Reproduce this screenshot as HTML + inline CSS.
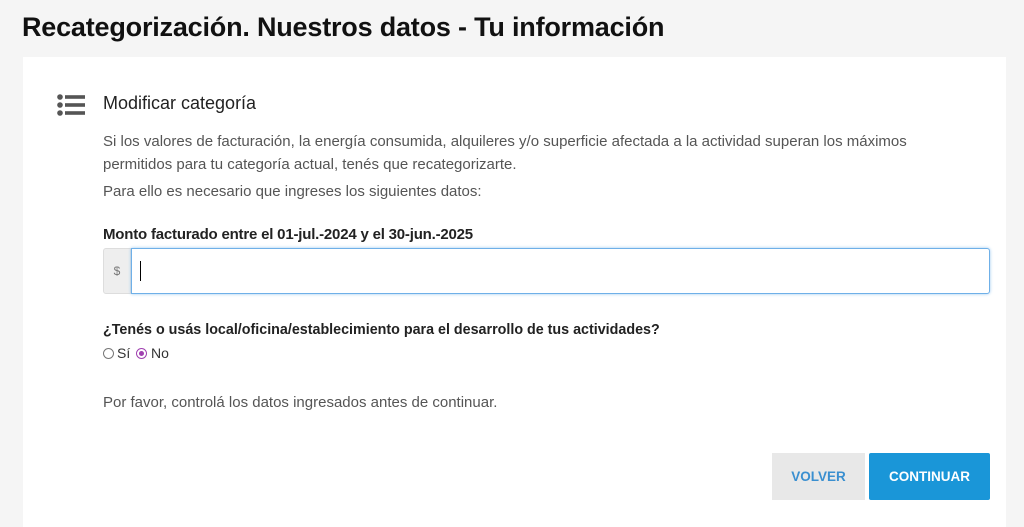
<!DOCTYPE html>
<html><head><meta charset="utf-8"><style>
body{margin:0;background:#f5f5f5;font-family:"Liberation Sans",sans-serif;width:1024px;height:521px;overflow:hidden;position:relative;color:#333}
h1{position:absolute;left:22px;top:12px;margin:0;font-size:27px;font-weight:bold;color:#111;letter-spacing:-0.2px}
.card{position:absolute;left:23px;top:57px;width:983px;height:470px;background:#fff}
.t{position:absolute;white-space:nowrap}
</style></head><body>
<h1>Recategorización. Nuestros datos - Tu información</h1>
<div class="card"></div>
<svg class="t" style="left:57px;top:94px" width="28" height="22" viewBox="0 0 28 22">
<g fill="#555"><circle cx="3" cy="3" r="2.8"/><circle cx="3" cy="11" r="2.8"/><circle cx="3" cy="19" r="2.8"/>
<rect x="8" y="1.2" width="20" height="3.6"/><rect x="8" y="9.2" width="20" height="3.6"/><rect x="8" y="17.2" width="20" height="3.6"/></g></svg>
<div class="t" style="left:103px;top:93px;font-size:18px;color:#222">Modificar categoría</div>
<div class="t" style="left:103px;top:130px;font-size:15px;line-height:23px;color:#555">Si los valores de facturación, la energía consumida, alquileres y/o superficie afectada a la actividad superan los máximos<br>permitidos para tu categoría actual, tenés que recategorizarte.</div>
<div class="t" style="left:103px;top:183px;font-size:15px;color:#555">Para ello es necesario que ingreses los siguientes datos:</div>
<div class="t" style="left:103px;top:226px;font-size:15px;font-weight:bold;color:#222;letter-spacing:-0.2px">Monto facturado entre el 01-jul.-2024 y el 30-jun.-2025</div>
<div class="t" style="left:103px;top:248px;width:28px;height:46px;background:#eee;border:1px solid #ddd;border-radius:3px 0 0 3px;box-sizing:border-box;font-size:12px;color:#777;text-align:center;line-height:45px">$</div>
<div class="t" style="left:131px;top:248px;width:859px;height:46px;border:1px solid #6fb0e8;box-shadow:0 0 3px #9cc8f0;box-sizing:border-box;border-radius:0 3px 3px 0;background:#fff"><div style="position:absolute;left:8px;top:12px;width:1px;height:20px;background:#000"></div></div>
<div class="t" style="left:103px;top:322px;font-size:14.3px;font-weight:bold;color:#222">¿Tenés o usás local/oficina/establecimiento para el desarrollo de tus actividades?</div>
<div class="t" style="left:103px;top:348px;width:9px;height:9px;border:1px solid #777;border-radius:50%"></div>
<div class="t" style="left:117px;top:345px;font-size:14px;color:#333">Sí</div>
<div class="t" style="left:136px;top:348px;width:9px;height:9px;border:1px solid #a040b0;border-radius:50%"><div style="margin:2px;width:5px;height:5px;border-radius:50%;background:#a040b0"></div></div>
<div class="t" style="left:151px;top:345px;font-size:14px;color:#333">No</div>
<div class="t" style="left:103px;top:394px;font-size:15px;color:#555">Por favor, controlá los datos ingresados antes de continuar.</div>
<div class="t" style="left:772px;top:453px;width:93px;height:47px;background:#e8e8e8;color:#3a8fd0;font-weight:bold;font-size:13.5px;text-align:center;line-height:47px">VOLVER</div>
<div class="t" style="left:869px;top:453px;width:121px;height:47px;background:#1a96d8;color:#fff;font-weight:bold;font-size:13.5px;text-align:center;line-height:47px;border-radius:2px">CONTINUAR</div>
</body></html>
